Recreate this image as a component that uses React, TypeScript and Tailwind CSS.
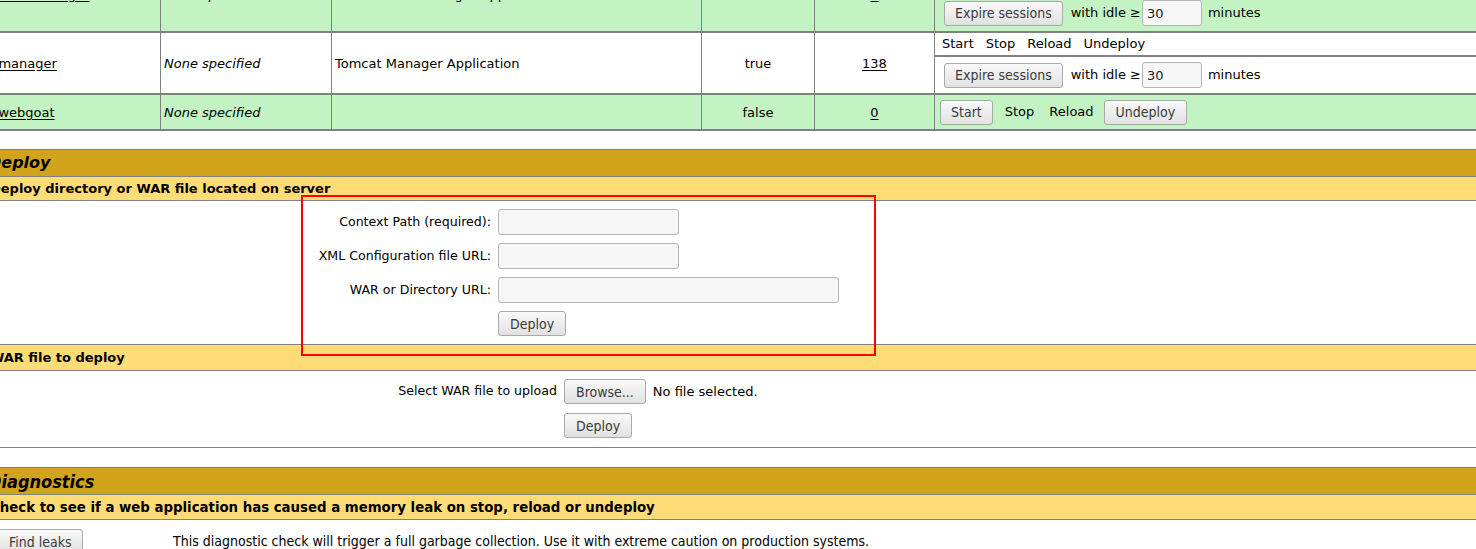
import React from 'react';

const sans = "font-['DejaVu_Sans','Liberation_Sans',sans-serif]";
const cond = "font-['DejaVu_Sans_Condensed','DejaVu_Sans','Liberation_Sans',sans-serif] [font-stretch:condensed]";

const Button: React.FC<{ label: string; className?: string }> = ({ label, className = '' }) => (
  <button
    type="button"
    className={`${cond} h-[25px] px-[10px] border border-[#a9a9a9] rounded-[3px] bg-linear-to-b from-[#f9f9f9] to-[#e1e1e1] text-[14px] leading-none text-[#3a3a3a] shrink-0 ${className}`}
  >
    {label}
  </button>
);

const TextInput: React.FC<{ width: string; value?: string }> = ({ width, value }) => (
  <input
    type="text"
    defaultValue={value}
    className={`${sans} ${width} h-[26px] px-1 border border-[#b4b4b4] rounded-[3px] bg-[#f6f6f6] text-[13px] text-[#222] outline-none`}
  />
);

const cols = 'grid grid-cols-[173px_171px_370px_113px_120px_1fr]';
const cell = 'border-r border-[#808080] flex items-center';

const ExpireRow = () => (
  <div className="flex items-center h-full pl-[9px] text-[13px]">
    <Button label="Expire sessions" />
    <span className="ml-[8px]">with idle ≥</span>
    <span className="ml-[1px]"><TextInput width="w-[60px]" value="30" /></span>
    <span className="ml-[6px]">minutes</span>
  </div>
);

interface AppRow {
  path: string;
  version: string;
  name: string;
  running: string;
  sessions: string;
  green: boolean;
  height: string;
}

const apps: AppRow[] = [
  { path: '/host-manager', version: 'None specified', name: 'Tomcat Host Manager Application', running: 'true', sessions: '0', green: true, height: 'h-[76px]' },
  { path: '/manager', version: 'None specified', name: 'Tomcat Manager Application', running: 'true', sessions: '138', green: false, height: 'h-[62px]' },
];

const SectionTitle: React.FC<{ children: React.ReactNode; className?: string }> = ({ children, className = '' }) => (
  <div className={`h-[28px] border-y border-[#808080] bg-[#D2A41C] flex items-center font-bold italic text-black ${className}`}>
    {children}
  </div>
);

const SectionHeader: React.FC<{ children: React.ReactNode; className?: string }> = ({ children, className = '' }) => (
  <div className={`h-[24px] border-b border-[#808080] bg-[#FFDC75] flex items-center pl-[2px] font-bold text-black ${className}`}>
    {children}
  </div>
);

export default function App() {
  return (
    <div className={`${sans} relative w-[1476px] h-[549px] overflow-hidden bg-white text-black`}>
      <div className="w-[1500px] -ml-[12px] -mt-[43px]">
        {/* applications table */}
        <div className="border-b-2 border-[#808080]">
          {apps.map((app) => (
            <div key={app.path} className={`${cols} ${app.height} border-b-2 border-[#808080] text-[13px] ${app.green ? 'bg-[#C3F3C3]' : 'bg-white'}`}>
              <div className={`${cell} pl-[6px] pt-[1px]`}><span className="underline underline-offset-2">{app.path}</span></div>
              <div className={`${cell} pl-[3px] pt-[1px] italic`}>{app.version}</div>
              <div className={`${cell} pl-[3px] pt-[1px]`}>{app.name}</div>
              <div className={`${cell} justify-center pt-[1px]`}>{app.running}</div>
              <div className={`${cell} justify-center pt-[1px]`}><span className="underline underline-offset-2">{app.sessions}</span></div>
              <div className="flex flex-col">
                <div className="flex-1 border-b-2 border-[#808080] flex items-center pl-[7px] gap-[12px] bg-white">
                  <span>Start</span><span>Stop</span><span>Reload</span><span>Undeploy</span>
                </div>
                <div className="h-[36px]"><ExpireRow /></div>
              </div>
            </div>
          ))}
          <div className={`${cols} h-[34px] bg-[#C3F3C3] text-[13px]`}>
            <div className={`${cell} pl-[6px] pt-[1px]`}><span className="underline underline-offset-2">/webgoat</span></div>
            <div className={`${cell} pl-[3px] pt-[1px] italic`}>None specified</div>
            <div className={`${cell} pl-[3px]`}></div>
            <div className={`${cell} justify-center pt-[1px]`}>false</div>
            <div className={`${cell} justify-center pt-[1px]`}><span className="underline underline-offset-2">0</span></div>
            <div className="flex items-center pl-[5px]">
              <Button label="Start" />
              <span className="ml-[12px]">Stop</span>
              <span className="ml-[15px]">Reload</span>
              <Button label="Undeploy" className="ml-[10px] px-[11px]" />
            </div>
          </div>
        </div>

        {/* deploy */}
        <SectionTitle className="mt-[18px] text-[16px]">Deploy</SectionTitle>
        <SectionHeader className="text-[13px]">Deploy directory or WAR file located on server</SectionHeader>
        <div className="grid grid-cols-[510px_1fr] gap-y-[8px] pt-[8px] pb-[8px] border-b border-[#808080] text-[12.6px] items-center">
          <div className="text-right pr-[7px] pt-[1px]">Context Path (required):</div>
          <div><TextInput width="w-[181px]" /></div>
          <div className="text-right pr-[7px] pt-[1px]">XML Configuration file URL:</div>
          <div><TextInput width="w-[181px]" /></div>
          <div className="text-right pr-[7px] pt-[1px]">WAR or Directory URL:</div>
          <div><TextInput width="w-[341px]" /></div>
          <div></div>
          <div><Button label="Deploy" className="px-[11px]" /></div>
        </div>
        <SectionHeader className="h-[26px] text-[13px] pt-[1px]">WAR file to deploy</SectionHeader>
        <div className="grid grid-cols-[576px_1fr] gap-y-[9px] pt-[8px] pb-[9px] border-b border-[#808080] text-[12.6px] items-center">
          <div className="text-right pr-[7px]">Select WAR file to upload</div>
          <div className="flex items-center">
            <Button label="Browse..." className="px-[11px]" />
            <span className="ml-[7px] text-[13px]">No file selected.</span>
          </div>
          <div></div>
          <div><Button label="Deploy" className="px-[11px]" /></div>
        </div>

        {/* diagnostics */}
        <SectionTitle className={`mt-[19px] text-[18px] ${cond}`}>Diagnostics</SectionTitle>
        <SectionHeader className={`text-[14.8px] h-[25px] ${cond}`}>Check to see if a web application has caused a memory leak on stop, reload or undeploy</SectionHeader>
        <div className="grid grid-cols-[185px_1fr] items-center pt-[9px]">
          <div className="pl-[10px]"><Button label="Find leaks" /></div>
          <div className={`${cond} text-[14px]`}>This diagnostic check will trigger a full garbage collection. Use it with extreme caution on production systems.</div>
        </div>
      </div>

      {/* highlight */}
      <div className="absolute left-[301px] top-[195px] w-[575px] h-[161px] border-2 border-[#ff0000] pointer-events-none" />
    </div>
  );
}
